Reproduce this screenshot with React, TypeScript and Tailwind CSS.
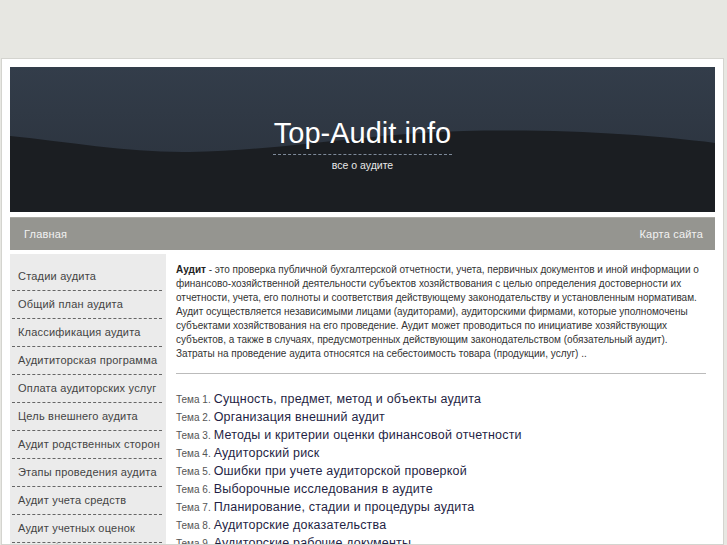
const sideLinks = [
  "Стадии аудита",
  "Общий план аудита",
  "Классификация аудита",
  "Аудититорская программа",
  "Оплата аудиторских услуг",
  "Цель внешнего аудита",
  "Аудит родственных сторон",
  "Этапы проведения аудита",
  "Аудит учета средств",
  "Аудит учетных оценок",
  "Аудит бухгалтерской отчетности",
];

const topics = [
  "Сущность, предмет, метод и объекты аудита",
  "Организация внешний аудит",
  "Методы и критерии оценки финансовой отчетности",
  "Аудиторский риск",
  "Ошибки при учете аудиторской проверкой",
  "Выборочные исследования в аудите",
  "Планирование, стадии и процедуры аудита",
  "Аудиторские доказательства",
  "Аудиторские рабочие документы",
  "Аудиторское заключение",
];

function Header() {
  return (
    <div className="relative h-[145px] overflow-hidden bg-gradient-to-b from-[#333d4a] to-[#29303a]">
      <svg
        className="absolute inset-0"
        width="705"
        height="145"
        viewBox="0 0 705 145"
        preserveAspectRatio="none"
      >
        <path
          d="M0 69 C 60 75, 120 86, 180 85 C 280 83, 360 66, 454 64 C 560 62, 640 68, 705 76 L705 145 L0 145 Z"
          fill="#1b1e22"
        />
      </svg>
      <div className="relative flex flex-col items-center pt-[48px]">
        <div className="border-b border-dashed border-[#7e8a9a] px-px pb-[3px] text-[29px] leading-[36px] text-white">
          Top-Audit.info
        </div>
        <div className="mt-[3px] text-[10.5px] leading-[14px] text-[#e8e8e8]">все о аудите</div>
      </div>
    </div>
  );
}

export default function App() {
  return (
    <div
      className="min-h-[545px] w-[727px] overflow-hidden bg-[#e7e7e2] pl-px pt-[58px]"
      style={{ fontFamily: '"Liberation Sans", Arial, sans-serif' }}
    >
      <div className="h-[487px] w-[723px] overflow-hidden border border-[#d4d4cf] bg-white p-2">
        <Header />
        <div className="mt-[5px] flex h-[33px] items-center justify-between border-t border-[#aaa9a4] bg-[#959590] pl-[14px] pr-[12px] text-[11px] tracking-[0.2px] text-[#f2f2f2]">
          <span>Главная</span>
          <span>Карта сайта</span>
        </div>
        <div className="mt-1 flex">
          <div className="w-[156px] shrink-0 bg-[#ebebeb] pt-[9px]">
            {sideLinks.map((t) => (
              <div
                key={t}
                className="ml-[2px] mr-1 flex h-[28px] items-center border-b border-dashed border-[#666] pl-[6px] text-[11px] tracking-[0.2px] text-[#444]"
              >
                {t}
              </div>
            ))}
          </div>
          <div className="ml-[10px] flex-1 pr-[9px] pt-[9px]">
            <p className="text-[10px] leading-[14px] text-[#333]">
              <b className="text-[#222]">Аудит</b> - это проверка публичной бухгалтерской отчетности, учета,
              первичных документов и иной информации о финансово-хозяйственной деятельности субъектов
              хозяйствования с целью определения достоверности их отчетности, учета, его полноты и
              соответствия действующему законодательству и установленным нормативам. Аудит осуществляется
              независимыми лицами (аудиторами), аудиторскими фирмами, которые уполномочены субъектами
              хозяйствования на его проведение. Аудит может проводиться по инициативе хозяйствующих
              субъектов, а также в случаях, предусмотренных действующим законодательством (обязательный
              аудит). Затраты на проведение аудита относятся на себестоимость товара (продукции, услуг) ..
            </p>
            <div className="mt-[12px] border-t border-[#bbb]" />
            <div className="mt-[16px]">
              {topics.map((t, i) => (
                <div key={t} className="flex h-[18px] items-center whitespace-nowrap">
                  <span className="mr-[3px] text-[10px] text-[#555]">Тема {i + 1}.</span>
                  <span className="text-[12.5px] tracking-[0.2px] text-[#1f1f45]">{t}</span>
                </div>
              ))}
            </div>
          </div>
        </div>
      </div>
    </div>
  );
}
